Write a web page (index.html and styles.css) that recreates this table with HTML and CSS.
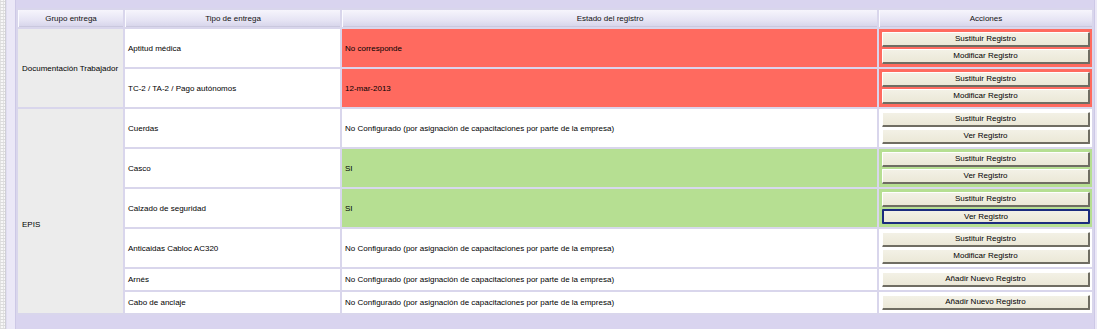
FILE: index.html
```html
<!DOCTYPE html>
<html lang="es">
<head>
<meta charset="utf-8">
<title>Entregas</title>
<link rel="stylesheet" href="styles.css">
</head>
<body>
<div class="page">
  <div class="strip"></div>
  <div class="band"></div>
  <div class="panel">
    <table class="grid">
      <colgroup>
        <col class="c1"><col class="c2"><col class="c3"><col class="c4">
      </colgroup>
      <thead>
        <tr>
          <th>Grupo entrega</th>
          <th>Tipo de entrega</th>
          <th>Estado del registro</th>
          <th>Acciones</th>
        </tr>
      </thead>
      <tbody>
        <tr class="r2">
          <td class="grp" rowspan="2">Documentación Trabajador</td>
          <td class="tipo">Aptitud médica</td>
          <td class="est red">No corresponde</td>
          <td class="acc red"><div class="btns"><button class="btn">Sustituir Registro</button><button class="btn">Modificar Registro</button></div></td>
        </tr>
        <tr class="r2">
          <td class="tipo">TC-2 / TA-2 / Pago autónomos</td>
          <td class="est red">12-mar-2013</td>
          <td class="acc red"><div class="btns"><button class="btn">Sustituir Registro</button><button class="btn">Modificar Registro</button></div></td>
        </tr>
        <tr class="r2">
          <td class="grp epis" rowspan="6">EPIS</td>
          <td class="tipo">Cuerdas</td>
          <td class="est">No Configurado (por asignación de capacitaciones por parte de la empresa)</td>
          <td class="acc"><div class="btns"><button class="btn">Sustituir Registro</button><button class="btn">Ver Registro</button></div></td>
        </tr>
        <tr class="r2">
          <td class="tipo">Casco</td>
          <td class="est green">SI</td>
          <td class="acc green"><div class="btns"><button class="btn">Sustituir Registro</button><button class="btn">Ver Registro</button></div></td>
        </tr>
        <tr class="r2">
          <td class="tipo">Calzado de seguridad</td>
          <td class="est green">SI</td>
          <td class="acc green"><div class="btns"><button class="btn">Sustituir Registro</button><button class="btn is-focused">Ver Registro</button></div></td>
        </tr>
        <tr class="r2">
          <td class="tipo">Anticaidas Cabloc AC320</td>
          <td class="est">No Configurado (por asignación de capacitaciones por parte de la empresa)</td>
          <td class="acc"><div class="btns"><button class="btn">Sustituir Registro</button><button class="btn">Modificar Registro</button></div></td>
        </tr>
        <tr class="r1">
          <td class="tipo">Arnés</td>
          <td class="est">No Configurado (por asignación de capacitaciones por parte de la empresa)</td>
          <td class="acc"><div class="btns"><button class="btn">Añadir Nuevo Registro</button></div></td>
        </tr>
        <tr class="r1">
          <td class="tipo">Cabo de anclaje</td>
          <td class="est">No Configurado (por asignación de capacitaciones por parte de la empresa)</td>
          <td class="acc"><div class="btns"><button class="btn">Añadir Nuevo Registro</button></div></td>
        </tr>
      </tbody>
    </table>
  </div>
  <div class="band-r"></div>
</div>
</body>
</html>
```

FILE: styles.css
```css
html, body {
  margin: 0;
  padding: 0;
  background: #d9d4ef;
}
body {
  font-family: "Liberation Sans", Arial, sans-serif;
  font-size: 8px;
  color: #000;
}
.page {
  display: flex;
  width: 1097px;
  height: 329px;
  overflow: hidden;
}
.strip {
  width: 5px;
  flex: none;
  border-right: 1px solid #cfcfd6;
  background-color: #f7f7f7;
  background-image:
    repeating-linear-gradient(0deg, #dcdcdc 0 1px, transparent 1px 3px),
    repeating-linear-gradient(90deg, #e2e2e2 0 1px, transparent 1px 3px);
}
.band {
  width: 8px;
  flex: none;
  background: #ebe8f7;
  border-right: 1px solid #cdc8e6;
  border-left: 1px solid #e0ddf0;
}
.panel {
  width: 1078px;
  flex: none;
  background: #d9d4ef;
  padding-top: 8px;
}
.band-r {
  flex: 1;
  background: #ebe8f7;
  border-left: 1px solid #cdc8e6;
}
.grid {
  width: 1078px;
  table-layout: fixed;
  border-collapse: separate;
  border-spacing: 2px;
  background: #d9d6ec;
}
.c1 { width: 105px; }
.c2 { width: 215px; }
.c3 { width: 535px; }
.c4 { width: 213px; }
th {
  height: 17px;
  padding: 0;
  font-weight: normal;
  text-align: center;
  color: #111;
  background: linear-gradient(#f6f5fc, #e6e4f4 60%, #d6d4ea);
  border-left: 1px solid #fbfbff;
  box-shadow: inset 0 -1px 0 #cac8de;
}
td {
  padding: 0 3px;
  vertical-align: middle;
  background: #fff;
  white-space: nowrap;
  overflow: hidden;
}
tr.r2 td { height: 38px; }
tr.r1 td { height: 21px; }
td.grp {
  background: #ececec;
  padding-left: 4px;
}
td.epis {
  padding-top: 26px;
}
td.red { background: #ff6a5f; }
td.green { background: #b6df92; }
td.acc {
  padding: 0 2px 0 3px;
}
.btns {
  display: flex;
  flex-direction: column;
  gap: 2px;
}
.btn {
  display: block;
  width: 100%;
  height: 15px;
  margin: 0;
  padding: 0;
  font-family: "Liberation Sans", Arial, sans-serif;
  font-size: 8px;
  color: #000;
  background: linear-gradient(#f3f1e6, #ebe8d7);
  border-top: 1px solid #ffffff;
  border-left: 1px solid #ffffff;
  border-right: 2px solid #6f6d62;
  border-bottom: 2px solid #6f6d62;
  border-radius: 1px;
  text-align: center;
  line-height: 12px;
}
.btn.is-focused {
  border: 2px solid #1b2b7e;
  line-height: 11px;
}
```
